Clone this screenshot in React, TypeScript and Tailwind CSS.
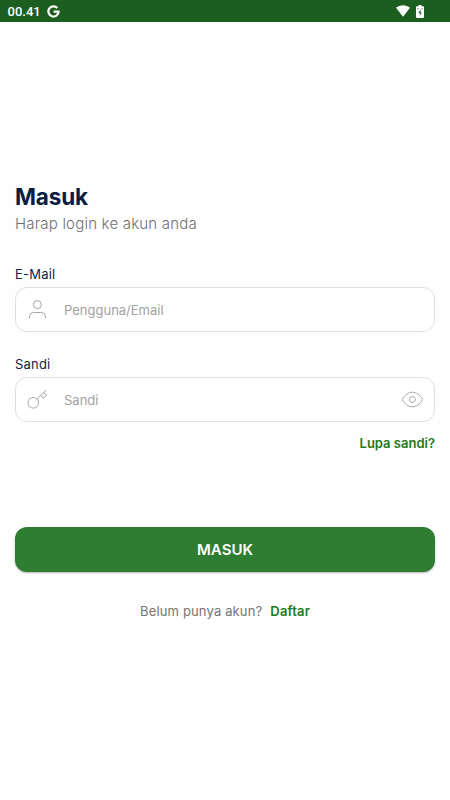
import React, { useState } from "react";

function GoogleMark() {
  return (
    <svg width="13" height="13" viewBox="0 0 13 13" fill="none" stroke="#fff" strokeWidth="2.2">
      <path d="M10.300 3A5.100 5.100 0 1 0 11.600 6.600H6.600" />
    </svg>
  );
}

function WifiIcon() {
  return (
    <svg width="14" height="12" viewBox="0 0 14 12" fill="#fff">
      <path d="M0 2.8C4-.75 10-.75 14 2.8L7 11.7Z" />
    </svg>
  );
}

function BatteryIcon() {
  return (
    <svg width="8" height="13" viewBox="0 0 8 13">
      <path d="M2.5 0h3v1.3H7q1 0 1 1V12q0 1-1 1H1q-1 0-1-1V2.300q0-1 1-1h1.500Z" fill="#fff" />
      <path d="M4.500 4.700 2.300 8h1.500v2.700L5.800 7.400H4.500ZM1.500 3.300h1v1h-1ZM5.500 3.300h1v1h-1Z" fill="#1b5e20" />
    </svg>
  );
}

function UserIcon() {
  return (
    <svg width="24" height="24" viewBox="0 0 24 24" fill="none" stroke="#a5a5a5" strokeWidth="1">
      <circle cx="12.400" cy="6.600" r="4" />
      <path d="M4.500 20.300v-2a4 4 0 0 1 4-3.800h8a4 4 0 0 1 4 3.800v2" />
    </svg>
  );
}

function KeyIcon() {
  return (
    <svg width="24" height="24" viewBox="0 0 24 24" fill="none" stroke="#a5a5a5" strokeWidth="1">
      <circle cx="8.300" cy="14.800" r="5.300" />
      <path d="M12.100 11 21.200 2.200M18.900 4.500l2.900 2.500-3.400 3.200-2.700-2.600" />
    </svg>
  );
}

function EyeIcon() {
  return (
    <svg width="24" height="24" viewBox="0 0 24 24" fill="none" stroke="#a5a5a5" strokeWidth="1">
      <path d="M2.300 11.500C7.400 1.800 17.400 1.800 22.500 11.500 17.400 21.200 7.400 21.200 2.300 11.500Z" />
      <circle cx="12.400" cy="11.500" r="3" />
    </svg>
  );
}

const fieldBox = "mt-[4px] flex h-[45px] items-center rounded-[12px] border border-[#e0e0e0] bg-white pl-[9px] pr-[10px]";
const inputStyle = "ml-[15px] min-w-0 flex-1 bg-transparent text-[13px] leading-5 text-[#333] outline-none placeholder:text-[#a2a2a2]";

export default function App() {
  const [visible, setVisible] = useState(false);
  return (
    <main className="h-[800px] w-[450px] overflow-hidden bg-[#fefefe] font-['Inter',sans-serif]">
      <header className="flex h-[22px] items-center bg-[#1b5e20] pl-[7.5px] pr-[26px] text-white">
        <span className="font-['Roboto',sans-serif] text-[13px] font-medium leading-none">00.41</span>
        <span className="ml-[6px]"><GoogleMark /></span>
        <span className="ml-auto"><WifiIcon /></span>
        <span className="ml-[6px]"><BatteryIcon /></span>
      </header>
      <div className="px-[15px] pt-[159px]">
        <h1 className="h-8 whitespace-nowrap text-[22.5px] font-bold leading-8 tracking-[-0.15px] text-[#0a1d42]">Masuk</h1>
        <p className="h-[22px] whitespace-nowrap text-[15px] font-light leading-[22px] tracking-[0.2px] text-[#707070]">Harap login ke akun anda</p>
        <label htmlFor="email" className="mt-[30px] block h-[18px] text-[13px] leading-[18px] tracking-[0.2px] text-[#122347]">E-Mail</label>
        <div className={fieldBox}>
          <UserIcon />
          <input id="email" className={inputStyle} placeholder="Pengguna/Email" />
        </div>
        <label htmlFor="password" className="mt-[23px] block h-[18px] text-[13px] leading-[18px] tracking-[0.2px] text-[#122347]">Sandi</label>
        <div className={fieldBox}>
          <KeyIcon />
          <input id="password" type={visible ? "text" : "password"} className={inputStyle} placeholder="Sandi" />
          <button type="button" aria-label="Sandi" onClick={() => setVisible(!visible)}><EyeIcon /></button>
        </div>
        <div className="mt-[11px] flex h-5 justify-end">
          <a className="whitespace-nowrap text-[13px] font-semibold leading-5 text-[#1b7a20]">Lupa sandi?</a>
        </div>
        <button type="button" className="mt-[74px] block h-[45px] w-full rounded-[12px] bg-[#2e7d32] pt-px text-[15px] font-semibold text-white shadow-[0_1px_2px_rgba(0,0,0,0.3)]">MASUK</button>
        <p className="mt-[29px] flex h-5 justify-center whitespace-nowrap text-[13px] leading-5 tracking-[0.15px] text-[#757575]">
          Belum punya akun?
          <a className="ml-2 font-semibold text-[#1b7a20]">Daftar</a>
        </p>
      </div>
    </main>
  );
}
